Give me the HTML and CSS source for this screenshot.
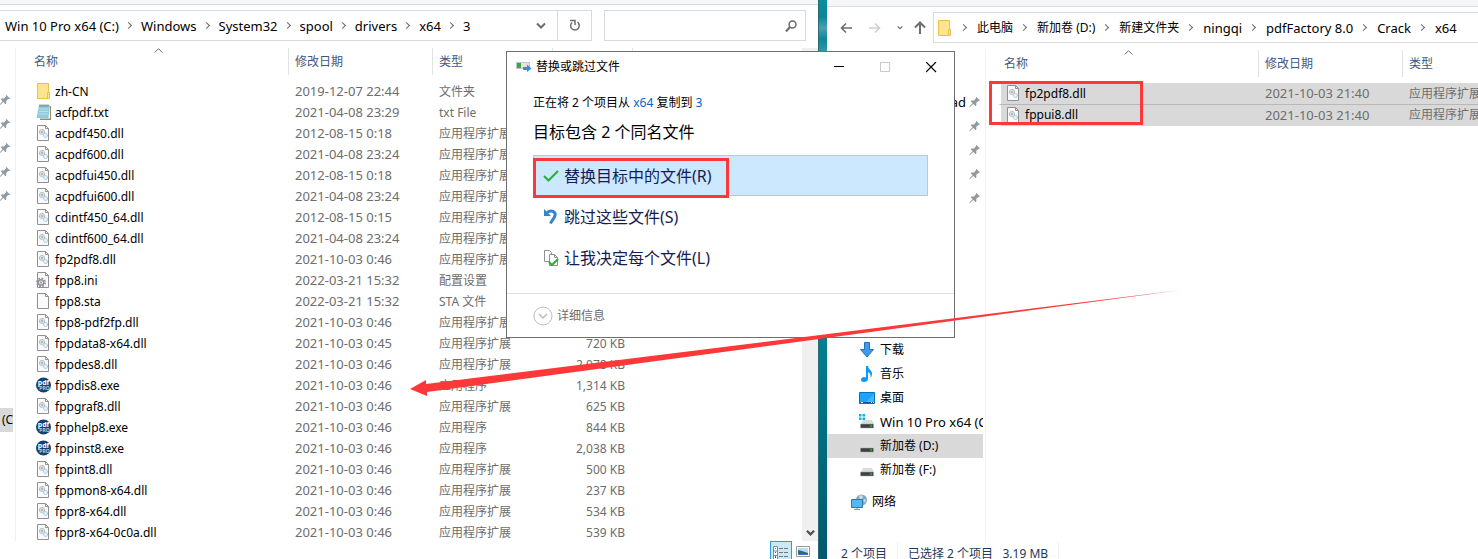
FILE: index.html
```html
<!DOCTYPE html>
<html lang="zh-CN">
<head>
  <meta charset="UTF-8" />
  <meta name="viewport" content="width=device-width, initial-scale=1.0" />
  <title>替换或跳过文件</title>
  <link rel="stylesheet" href="styles.css">
</head>
<body>
  <!-- Shared icons -->
  <svg class="sprite" aria-hidden="true">
    <symbol id="i-folder" viewBox="0 0 16 16">
      <path d="M1.500.500h11v15h-11z" fill="#ffe48f" stroke="#e9c14c"/>
      <path d="M11.500 9.500h2v6h-2z" fill="#ffe48f" stroke="#e9c14c"/>
    </symbol>
    <symbol id="i-txt" viewBox="0 0 16 16">
      <path d="M4 2h11v14H4z" fill="#9a8a6c"/>
      <path d="M4 2h10v12.500H3z" fill="#fff"/>
      <path d="M3 1.500h11l-1.500 12.500H.500z" fill="#8fcbd9"/>
      <path d="M3.500 5h9M3 7.500h9M2.500 10h9" stroke="#b9e2ea"/>
      <path d="M3.500 1.500h10" stroke="#555" stroke-width="2" stroke-dasharray="1 1"/>
    </symbol>
    <symbol id="i-page" viewBox="0 0 16 16">
      <path d="M1.500.500h8l3 3v12h-11z" fill="#fafafa" stroke="#909090"/>
      <path d="M9.500.500v3h3" fill="none" stroke="#909090"/>
    </symbol>
    <symbol id="i-dll" viewBox="0 0 16 16">
      <path d="M1.500.500h8l3 3v12h-11z" fill="#fafafa" stroke="#909090"/>
      <path d="M9.500.500v3h3" fill="none" stroke="#909090"/>
      <circle cx="6" cy="7" r="2.600" fill="#eceeef" stroke="#9aa0a4" stroke-dasharray="1.200 .500"/>
      <circle cx="6" cy="7" r="1" fill="none" stroke="#8c9399" stroke-width=".7"/>
      <circle cx="9.500" cy="10.500" r="2" fill="#e6f3fb" stroke="#8fc0e2" stroke-dasharray="1.200 .500"/>
    </symbol>
    <symbol id="i-ini" viewBox="0 0 16 16">
      <path d="M1.500.500h8l3 3v12h-11z" fill="#fafafa" stroke="#909090"/>
      <path d="M9.500.500v3h3" fill="none" stroke="#909090"/>
      <circle cx="5" cy="10.500" r="4.200" fill="none" stroke="#8d9499" stroke-width="1.600" stroke-dasharray="1.800 1.500"/>
      <circle cx="5" cy="10.500" r="2.800" fill="#e4e7e9" stroke="#8d9499" stroke-width="1.400"/>
      <circle cx="5" cy="10.500" r="1" fill="#8d9499"/>
    </symbol>
    <symbol id="i-exe" viewBox="0 0 16 16">
      <circle cx="7.500" cy="8" r="7.500" fill="#14426f"/>
      <text x="7.500" y="8" class="exe-text">pdf</text>
      <text x="8.500" y="13" class="exe-text exe-small">PRO</text>
    </symbol>
    <symbol id="i-pin" viewBox="0 0 12 12">
      <path d="M7.500 1 11 4.500l-1 .6-.8-.1L7.200 7l.2 2.300-.9.900L4.300 8 .700 11.300 0 11l3.600-3.700L1.700 5.200l.9-.8 2.300.2L6.900 2.600 6.800 1.700z" fill="#8f9aa3"/>
    </symbol>
    <symbol id="i-down" viewBox="0 0 10 7">
      <path d="M1 1.500l4 4 4-4" fill="none" stroke="#6b6b6b" stroke-width="2"/>
    </symbol>
    <symbol id="i-sort" viewBox="0 0 9 5">
      <path d="M.700 4.500 4.500.700l3.800 3.800" fill="none" stroke="#6b6b6b"/>
    </symbol>
    <symbol id="i-drive" viewBox="0 0 16 16">
      <path d="M4 6h9l2 4H2z" fill="#d9dbdd"/>
      <path d="M1.500 10h13v4h-13z" fill="#3d4142" stroke="#a7abad" stroke-width=".5"/>
      <path d="M11 11.500h2v1h-2z" fill="#35e02f"/>
    </symbol>
  </svg>

  <main class="desktop">
    <!-- Target folder -->
    <section class="window">
      <div class="ribbon"></div>
      <div class="toolbar">
        <nav class="address address-left">
          <ol class="crumbs crumbs-left">
            <li><a href="#">Win 10 Pro x64 (C:)</a></li>
            <li><a href="#">Windows</a></li>
            <li><a href="#">System32</a></li>
            <li><a href="#">spool</a></li>
            <li><a href="#">drivers</a></li>
            <li><a href="#">x64</a></li>
            <li><a href="#">3</a></li>
          </ol>
          <button type="button" class="history" aria-label="以前的位置"><svg width="10" height="7"><use href="#i-down"/></svg></button>
          <button type="button" class="refresh" aria-label="刷新">
            <svg width="12" height="13" viewBox="0 0 12 13"><path d="M3 3.500a4.300 4.300 0 1 0 5.500-.3" fill="none" stroke="#6b6b6b" stroke-width="1.500"/><path d="M1 1.500h5v4.500" fill="none" stroke="#6b6b6b" stroke-width="1.500"/></svg>
          </button>
        </nav>
        <div class="search">
          <input type="text" aria-label="搜索">
          <svg width="12" height="12" viewBox="0 0 12 12"><circle cx="7.500" cy="4.500" r="3.500" fill="none" stroke="#6b6b6b" stroke-width="1.500"/><path d="M5 7 1 11.500" stroke="#6b6b6b" stroke-width="2"/></svg>
        </div>
      </div>
      <div class="content">
        <aside class="tree tree-left">
          <ul class="pins">
            <li><svg width="12" height="12"><use href="#i-pin"/></svg></li>
            <li><svg width="12" height="12"><use href="#i-pin"/></svg></li>
            <li><svg width="12" height="12"><use href="#i-pin"/></svg></li>
            <li><svg width="12" height="12"><use href="#i-pin"/></svg></li>
            <li><svg width="12" height="12"><use href="#i-pin"/></svg></li>
          </ul>
          <div class="current">(C</div>
        </aside>
        <div class="files">
          <table>
            <colgroup><col class="c-name"><col class="c-date"><col class="c-type"><col class="c-size"></colgroup>
            <thead>
              <tr>
                <th><div>名称<svg class="sort" width="9" height="5"><use href="#i-sort"/></svg></div></th>
                <th><div>修改日期</div></th>
                <th><div>类型</div></th>
                <th><div></div></th>
              </tr>
            </thead>
            <tbody>
              <tr><td><svg class="icon"><use href="#i-folder"/></svg>zh-CN</td><td>2019-12-07 22:44</td><td>文件夹</td><td></td></tr>
              <tr><td><svg class="icon"><use href="#i-txt"/></svg>acfpdf.txt</td><td>2021-04-08 23:29</td><td>txt File</td><td></td></tr>
              <tr><td><svg class="icon"><use href="#i-dll"/></svg>acpdf450.dll</td><td>2012-08-15 0:18</td><td>应用程序扩展</td><td></td></tr>
              <tr><td><svg class="icon"><use href="#i-dll"/></svg>acpdf600.dll</td><td>2021-04-08 23:24</td><td>应用程序扩展</td><td></td></tr>
              <tr><td><svg class="icon"><use href="#i-dll"/></svg>acpdfui450.dll</td><td>2012-08-15 0:18</td><td>应用程序扩展</td><td></td></tr>
              <tr><td><svg class="icon"><use href="#i-dll"/></svg>acpdfui600.dll</td><td>2021-04-08 23:24</td><td>应用程序扩展</td><td></td></tr>
              <tr><td><svg class="icon"><use href="#i-dll"/></svg>cdintf450_64.dll</td><td>2012-08-15 0:15</td><td>应用程序扩展</td><td></td></tr>
              <tr><td><svg class="icon"><use href="#i-dll"/></svg>cdintf600_64.dll</td><td>2021-04-08 23:24</td><td>应用程序扩展</td><td></td></tr>
              <tr><td><svg class="icon"><use href="#i-dll"/></svg>fp2pdf8.dll</td><td>2021-10-03 0:46</td><td>应用程序扩展</td><td></td></tr>
              <tr><td><svg class="icon"><use href="#i-ini"/></svg>fpp8.ini</td><td>2022-03-21 15:32</td><td>配置设置</td><td></td></tr>
              <tr><td><svg class="icon"><use href="#i-page"/></svg>fpp8.sta</td><td>2022-03-21 15:32</td><td>STA 文件</td><td></td></tr>
              <tr><td><svg class="icon"><use href="#i-dll"/></svg>fpp8-pdf2fp.dll</td><td>2021-10-03 0:46</td><td>应用程序扩展</td><td></td></tr>
              <tr><td><svg class="icon"><use href="#i-dll"/></svg>fppdata8-x64.dll</td><td>2021-10-03 0:45</td><td>应用程序扩展</td><td>720 KB</td></tr>
              <tr><td><svg class="icon"><use href="#i-dll"/></svg>fppdes8.dll</td><td>2021-10-03 0:46</td><td>应用程序扩展</td><td>2,078 KB</td></tr>
              <tr><td><svg class="icon"><use href="#i-exe"/></svg>fppdis8.exe</td><td>2021-10-03 0:46</td><td>应用程序</td><td>1,314 KB</td></tr>
              <tr><td><svg class="icon"><use href="#i-dll"/></svg>fppgraf8.dll</td><td>2021-10-03 0:46</td><td>应用程序扩展</td><td>625 KB</td></tr>
              <tr><td><svg class="icon"><use href="#i-exe"/></svg>fpphelp8.exe</td><td>2021-10-03 0:46</td><td>应用程序</td><td>844 KB</td></tr>
              <tr><td><svg class="icon"><use href="#i-exe"/></svg>fppinst8.exe</td><td>2021-10-03 0:46</td><td>应用程序</td><td>2,038 KB</td></tr>
              <tr><td><svg class="icon"><use href="#i-dll"/></svg>fppint8.dll</td><td>2021-10-03 0:46</td><td>应用程序扩展</td><td>500 KB</td></tr>
              <tr><td><svg class="icon"><use href="#i-dll"/></svg>fppmon8-x64.dll</td><td>2021-10-03 0:46</td><td>应用程序扩展</td><td>237 KB</td></tr>
              <tr><td><svg class="icon"><use href="#i-dll"/></svg>fppr8-x64.dll</td><td>2021-10-03 0:46</td><td>应用程序扩展</td><td>534 KB</td></tr>
              <tr><td><svg class="icon"><use href="#i-dll"/></svg>fppr8-x64-0c0a.dll</td><td>2021-10-03 0:46</td><td>应用程序扩展</td><td>539 KB</td></tr>
            </tbody>
          </table>
        </div>
        <div class="scrollbar"><svg width="9" height="7" viewBox="0 0 10 7"><path d="M1 1.500l4 4 4-4" fill="none" stroke="#505050" stroke-width="2.500"/></svg></div>
      </div>
      <footer class="status status-left">
        <button type="button" class="view active" aria-label="详细信息视图">
          <svg width="16" height="14" viewBox="0 0 16 14"><path d="M.500.500h4v13h-4zM.500 5h4M.500 9.500h4" fill="#fff" stroke="#8b8b8b"/><path d="M2 2h1v1H2z" fill="#2a7"/><path d="M2 6h1v1H2z" fill="#27c"/><path d="M2 10h1v2H2z" fill="#d22"/><path d="M6 2.500h10M6 6.500h10M6 10.500h10" stroke="#777" stroke-dasharray="4 1"/></svg>
        </button>
        <button type="button" class="view" aria-label="大缩略图视图">
          <svg width="14" height="11" viewBox="0 0 14 11"><path d="M.500.500h13v10H.500z" fill="#fff" stroke="#999"/><path d="M2 2h10v7H2z" fill="#b6dcf6"/><path d="M2 4l4 1 6 2v1H2z" fill="#2d6e6c"/><path d="M2 8h10v1H2z" fill="#3a74c4"/></svg>
        </button>
      </footer>
    </section>

    <div class="wallpaper"></div>

    <!-- Source folder -->
    <section class="window window-right">
      <div class="ribbon ribbon-right"></div>
      <div class="toolbar toolbar-right">
        <div class="history-nav">
          <button type="button" aria-label="后退"><svg width="12" height="12" viewBox="0 0 12 12"><path d="M12 6H1.500M6 1.500 1.500 6 6 10.500" fill="none" stroke="#6e6e6e" stroke-width="1.600"/></svg></button>
          <button type="button" aria-label="前进"><svg width="12" height="12" viewBox="0 0 12 12"><path d="M0 6h10.500M6 1.500 10.500 6 6 10.500" fill="none" stroke="#cfcfcf" stroke-width="1.600"/></svg></button>
          <button type="button" class="recent" aria-label="最近浏览的位置"><svg width="6" height="5" viewBox="0 0 10 7"><use href="#i-down"/></svg></button>
          <button type="button" class="up" aria-label="上移"><svg width="12" height="13" viewBox="0 0 12 13"><path d="M6 13V2M1 6.500 6 1.500l5 5" fill="none" stroke="#6e6e6e" stroke-width="2"/></svg></button>
        </div>
        <nav class="address">
          <svg class="icon"><use href="#i-folder"/></svg>
          <ol class="crumbs crumbs-right">
            <li><a href="#" class="cjk">此电脑</a></li>
            <li><a href="#" class="cjk">新加卷 (D:)</a></li>
            <li><a href="#" class="cjk">新建文件夹</a></li>
            <li><a href="#">ningqi</a></li>
            <li><a href="#">pdfFactory 8.0</a></li>
            <li><a href="#">Crack</a></li>
            <li><a href="#">x64</a></li>
          </ol>
        </nav>
      </div>
      <div class="content">
        <aside class="tree">
          <ul class="pins">
            <li>ad<svg width="12" height="12"><use href="#i-pin"/></svg></li>
            <li><svg width="12" height="12"><use href="#i-pin"/></svg></li>
            <li><svg width="12" height="12"><use href="#i-pin"/></svg></li>
            <li><svg width="12" height="12"><use href="#i-pin"/></svg></li>
            <li><svg width="12" height="12"><use href="#i-pin"/></svg></li>
          </ul>
          <ul class="places">
            <li><svg class="icon" viewBox="0 0 16 16"><path d="M5.500.500h5v7h4L8 15 1.500 7.500h4z" fill="#3f9bea" stroke="#1f73bd"/></svg>下载</li>
            <li><svg class="icon" viewBox="0 0 16 16"><path d="M7 0h2c0 3 4 4 4 8 0 2-1 3-1.500 4 .5-3-.5-5-2.500-6v7c0 2-2 3-4 3s-3-1-3-2.300S3.500 11 5 11c.8 0 1.500.2 2 .5z" fill="#0a9bf5"/></svg>音乐</li>
            <li><svg class="icon" viewBox="0 0 16 16"><path d="M.500 2.500h15v11H.500z" fill="#1ca3fb" stroke="#0b6fb3"/><path d="M7 12 15 4v8z" fill="#46b5ff"/><path d="M1 12.500h14" stroke="#0b5f9b"/><path d="M2 12.500h2M12 12.500h1M14 12.500h1" stroke="#fff"/></svg>桌面</li>
            <li class="latin"><svg class="icon" viewBox="0 0 16 16"><use href="#i-drive"/><path d="M0 0h2.500v2.500H0zM3.500 0h2.500v2.500H3.500zM0 3.500h2.500V6H0zM3.500 3.500h2.500V6H3.500z" fill="#00b7ea"/></svg><span>Win 10 Pro x64 (C</span></li>
            <li class="selected"><svg class="icon"><use href="#i-drive"/></svg>新加卷 (D:)</li>
            <li><svg class="icon"><use href="#i-drive"/></svg>新加卷 (F:)</li>
            <li class="network"><svg class="icon" viewBox="0 0 16 16"><circle cx="10.500" cy="6" r="5.500" fill="#7fa9c2"/><path d="M8 2l3-1 1 3-3 2zM12 6l3-1-1 4z" fill="#c9dfeb"/><path d="M.500 5.500h11v8H.500z" fill="#55b8f5" stroke="#33779f"/><path d="M3 15.500h6M6 14v2" stroke="#8b979e"/></svg>网络</li>
          </ul>
        </aside>
        <div class="files">
          <table class="picked">
            <colgroup><col class="c-name"><col class="c-date"><col class="c-type"></colgroup>
            <thead>
              <tr>
                <th><div>名称<svg class="sort" width="9" height="5"><use href="#i-sort"/></svg></div></th>
                <th><div>修改日期</div></th>
                <th><div>类型</div></th>
              </tr>
            </thead>
            <tbody>
              <tr><td><svg class="icon"><use href="#i-dll"/></svg>fp2pdf8.dll</td><td>2021-10-03 21:40</td><td>应用程序扩展</td></tr>
              <tr><td><svg class="icon"><use href="#i-dll"/></svg>fppui8.dll</td><td>2021-10-03 21:40</td><td>应用程序扩展</td></tr>
            </tbody>
          </table>
          <div class="mark mark-files"></div>
        </div>
      </div>
      <footer class="status status-right">
        <span>2 个项目</span>
        <span>已选择 2 个项目 &nbsp; 3.19 MB</span>
      </footer>
    </section>

    <!-- Copy conflict dialog -->
    <div class="dialog" role="dialog" aria-labelledby="dialog-title">
      <header class="titlebar">
        <svg width="16" height="10" viewBox="0 0 16 10"><path d="M.500.500h13v6H.500z" fill="#e3e3e3" stroke="#c4c4c4"/><path d="M1 1h4v5H1z" fill="#2fb135"/><path d="M7 5h4V2.500l4.500 4-4.500 3.500V8H7z" fill="#2d8fe2"/></svg>
        <h1 id="dialog-title">替换或跳过文件</h1>
        <button type="button" aria-label="最小化"><svg width="11" height="11"><path d="M0 4.500h10" stroke="#000"/></svg></button>
        <button type="button" aria-label="最大化" disabled><svg width="11" height="11"><path d="M.500.500h9v9h-9z" fill="none" stroke="#c8c8c8"/></svg></button>
        <button type="button" aria-label="关闭"><svg width="11" height="11"><path d="M0 0l10 10M10 0l-10 10" stroke="#000" stroke-width="1.200"/></svg></button>
      </header>
      <div class="dialog-body">
        <p class="summary">正在将 2 个项目从 <a href="#">x64</a> 复制到 <a href="#">3</a></p>
        <h2>目标包含 2 个同名文件</h2>
        <div class="options">
          <button type="button" class="option highlighted">
            <svg width="16" height="16" viewBox="0 0 16 16"><path d="M1 8l4.500 4.500L15 3" fill="none" stroke="#2aad35" stroke-width="2"/></svg>替换目标中的文件(R)
            <span class="mark mark-option"></span>
          </button>
          <button type="button" class="option">
            <svg width="16" height="16" viewBox="0 0 16 16"><path d="M4 3.500C8 .5 13 2.500 12 6.500c-.5 3-3 4.500-4.500 8" fill="none" stroke="#2f86cf" stroke-width="3"/><path d="M1 0v7h7z" fill="#2f86cf"/></svg>跳过这些文件(S)
          </button>
          <button type="button" class="option">
            <svg width="16" height="16" viewBox="0 0 16 16"><path d="M1.500.500h5l2 2v9h-7z" fill="#fff" stroke="#909090"/><path d="M6.500 4.500h5l3 3v8h-8z" fill="#fff" stroke="#909090"/><path d="M11.500 4.500v3h3" fill="none" stroke="#909090"/><path d="M6 12l3 3 6-6" fill="none" stroke="#2aad35" stroke-width="2"/></svg>让我决定每个文件(L)
          </button>
        </div>
      </div>
      <button type="button" class="details">
        <svg width="20" height="20" viewBox="0 0 20 20"><circle cx="10" cy="10" r="9" fill="#fff" stroke="#bdbdbd"/><path d="M6 8l4 4 4-4" fill="none" stroke="#bdbdbd" stroke-width="1.500"/></svg>详细信息
      </button>
    </div>

    <svg class="arrow" width="772" height="108" viewBox="0 0 772 108" aria-hidden="true">
      <path d="M0 100 16 91v4L771 1 17 103v4z" fill="#fd3838"/>
    </svg>
  </main>
</body>
</html>
```

FILE: styles.css
```css
* {
  box-sizing: border-box;
}
body {
  margin: 0;
  font-family: "Noto Sans", "Noto Sans CJK SC", sans-serif;
  font-size: 12px;
  line-height: 20px;
  color: #000;
  background-color: #fff;
}
ul, ol, p, h1, h2 {
  margin: 0;
  padding: 0;
  list-style: none;
  font-weight: normal;
}
a {
  color: inherit;
  text-decoration: none;
}
button {
  display: flex;
  align-items: center;
  justify-content: center;
  padding: 0;
  border: none;
  background: none;
  font: inherit;
  color: inherit;
}
svg {
  display: block;
  flex: none;
}
.sprite {
  position: absolute;
  width: 0;
  height: 0;
}
.icon {
  width: 16px;
  height: 16px;
}
.exe-text {
  font-size: 7px;
  font-weight: bold;
  text-anchor: middle;
  fill: #fff;
}
.exe-small {
  font-size: 5px;
  fill: #b9cbdc;
}

/* Windows */
.desktop {
  position: relative;
  display: grid;
  grid-template-columns: minmax(0, 818fr) 9px minmax(0, 651fr);
  height: 100vh;
  overflow: hidden;
}
.window {
  display: flex;
  flex-direction: column;
  min-height: 0;
  background-color: #fff;
}
.wallpaper {
  background: linear-gradient(#0a8c9c, #0a8797 3%, #4aa3ad 5%, #0a8797 7%, #2c97a4 9%, #007f90 60%, #005a6b);
  border-left: 1px solid #2a6b76;
}
.ribbon {
  height: 5px;
  background-color: #f5f6f7;
  border-bottom: 1px solid #dadbdc;
}
.ribbon-right {
  height: 7px;
}
.toolbar {
  display: flex;
  gap: 12px;
  padding: 5px 12px 0 0;
}
.toolbar-right {
  gap: 0;
  padding-right: 0;
}
.address {
  display: flex;
  flex: 1;
  align-items: center;
  height: 31px;
  min-width: 0;
  border: 1px solid #d9d9d9;
  border-right: none;
  padding-left: 3px;
}
.address-left {
  border-left: none;
  border-right: 1px solid #d9d9d9;
  padding-left: 5px;
}
.crumbs {
  display: flex;
  flex: 1;
  font-size: 13px;
  white-space: nowrap;
}
.crumbs .cjk {
  font-size: 12px;
}
.crumbs li {
  display: flex;
  align-items: center;
}
.crumbs li + li::before,
.crumbs-right li:first-child::before {
  content: "";
  width: 4px;
  height: 4px;
  margin: 0 11px 0 8px;
  border: solid #6b6b6b;
  border-width: 1px 1px 0 0;
  transform: rotate(45deg);
}
.crumbs-left li + li::before {
  margin: 0 10px 0 7px;
}
.history {
  width: 32px;
  height: 29px;
}
.refresh {
  width: 34px;
  height: 29px;
  border-left: 1px solid #d9d9d9;
}
.search {
  display: flex;
  align-items: center;
  width: 202px;
  height: 31px;
  padding-right: 8px;
  border: 1px solid #d9d9d9;
}
.search input {
  flex: 1;
  min-width: 0;
  border: none;
  outline: none;
  font: inherit;
}
.history-nav {
  display: flex;
  align-items: center;
  gap: 17px;
  width: 106px;
  padding-left: 13px;
}
.history-nav .recent {
  margin-right: -6px;
  margin-left: -1px;
}
.content {
  display: flex;
  flex: 1;
  min-height: 0;
  padding-top: 7px;
}

/* Navigation tree */
.tree {
  flex: none;
  width: 159px;
  padding: 40px 2px 0 0;
  border-right: 1px solid #f0f0f0;
  overflow: hidden;
}
.tree-left {
  width: 16px;
}
.pins li {
  display: flex;
  align-items: center;
  justify-content: flex-end;
  gap: 3px;
  height: 24px;
  padding-right: 2px;
  font-size: 13px;
}
.current {
  height: 24px;
  margin-top: 200px;
  padding-left: 2px;
  overflow: hidden;
  background-color: #d9d9d9;
  line-height: 24px;
}
.places {
  margin-top: 128px;
}
.places li {
  display: flex;
  align-items: center;
  gap: 5px;
  height: 24px;
  padding-left: 32px;
  overflow: hidden;
  white-space: nowrap;
}
.places .latin {
  font-size: 13px;
}
.places .selected {
  background-color: #d9d9d9;
}
.places .network {
  margin-top: 8px;
  padding-left: 24px;
}

/* File list */
.files {
  position: relative;
  flex: 1;
  min-width: 0;
  padding-left: 12px;
  overflow: hidden;
}
table {
  width: 0;
  table-layout: fixed;
  border-spacing: 0;
}
.c-name {
  width: 261px;
}
.c-date {
  width: 144px;
}
.c-type {
  width: 120px;
}
.c-size {
  width: 80px;
}
th {
  height: 33px;
  padding: 0;
  vertical-align: top;
  font-weight: normal;
  text-align: left;
  color: #43597a;
}
th div {
  position: relative;
  height: 27px;
  padding-left: 6px;
  border-right: 1px solid #e2e2e2;
  line-height: 27px;
}
.sort {
  position: absolute;
  top: 0;
  left: 50%;
  margin-left: -4px;
}
td {
  height: 21px;
  padding: 0 0 0 6px;
  line-height: 21px;
  white-space: nowrap;
  color: #6d6d6d;
}
td:first-child {
  padding-left: 5px;
  border-left: 3px solid transparent;
  background-clip: padding-box;
  color: #000;
}
td:first-child .icon {
  float: left;
  margin: 2px 3px 0 0;
}
td:nth-child(2) {
  font-size: 13px;
}
td:nth-child(4) {
  padding: 0 8px 0 0;
  text-align: right;
}
.picked td {
  background-color: #d9d9d9;
}
.picked tr + tr td {
  height: 22px;
  border-top: 1px solid #b8b8b8;
  line-height: 20px;
  vertical-align: top;
}
.scrollbar {
  display: flex;
  align-items: flex-end;
  justify-content: center;
  width: 16px;
  padding-bottom: 5px;
  background-color: #f0f0f0;
}

/* Status bars */
.status {
  display: flex;
  overflow: hidden;
  white-space: nowrap;
}
.status-left {
  justify-content: flex-end;
  align-items: flex-start;
  gap: 4px;
  height: 18px;
  padding-right: 8px;
}
.view {
  padding-top: 5px;
}
.view.active {
  width: 22px;
  height: 24px;
  padding: 0;
  border: 1px solid #26a0da;
  background-color: #cbe8f6;
}
.status-right {
  height: 17px;
  padding-left: 14px;
  line-height: 24px;
  color: #1e395b;
}
.status-right span {
  padding-right: 10px;
  margin-right: 10px;
  border-right: 1px solid #f0f0f0;
}

/* Dialog */
.dialog {
  position: absolute;
  top: 51px;
  left: 506px;
  width: 449px;
  border: 1px solid #6e6e6e;
  background-color: #fff;
}
.titlebar {
  display: flex;
  align-items: center;
  height: 30px;
  padding-left: 9px;
}
.titlebar h1 {
  flex: 1;
  margin-left: 4px;
  font-size: 12px;
}
.titlebar button {
  width: 46px;
  height: 30px;
}
.dialog-body {
  padding: 11px 26px 15px;
}
.summary a {
  color: #0066cc;
}
h2 {
  margin-top: 8px;
  font-size: 16px;
  line-height: 22px;
}
.options {
  margin-top: 12px;
}
.option {
  position: relative;
  justify-content: flex-start;
  gap: 5px;
  width: 100%;
  height: 41px;
  padding-left: 9px;
  border: 1px solid transparent;
  font-size: 16px;
  color: #151c55;
}
.option.highlighted {
  border-color: #99d1ff;
  background-color: #cce8ff;
}
.details {
  justify-content: flex-start;
  gap: 4px;
  width: 100%;
  height: 44px;
  padding-left: 26px;
  border-top: 1px solid #dfdfdf;
  color: #6d6d6d;
}

/* Red highlights */
.mark {
  position: absolute;
  border: 3px solid #fd3838;
}
.mark-option {
  top: 2px;
  left: -1px;
  width: 196px;
  height: 40px;
}
.mark-files {
  top: 31px;
  left: 3px;
  width: 154px;
  height: 44px;
}
.arrow {
  position: absolute;
  top: 289px;
  left: 410px;
}
```
